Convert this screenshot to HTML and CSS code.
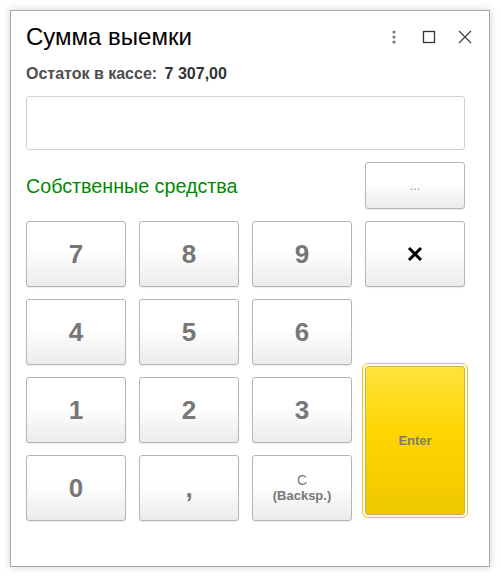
FILE: index.html
```html
<!DOCTYPE html>
<html lang="ru">
<head>
  <meta charset="UTF-8">
  <title>Сумма выемки</title>
  <link rel="stylesheet" href="styles.css">
</head>
<body>

  <div class="window">
    <div class="header">
      <div class="title">Сумма выемки</div>
      <div class="controls">
        <svg class="icon" width="12" height="14" viewBox="0 0 12 14">
          <circle cx="6" cy="2" r="1.6" fill="#777"/>
          <circle cx="6" cy="7" r="1.6" fill="#777"/>
          <circle cx="6" cy="12" r="1.6" fill="#777"/>
        </svg>
        <svg class="icon" width="14" height="14" viewBox="0 0 14 14">
          <rect x="1.5" y="1.5" width="11" height="11" fill="none" stroke="#333" stroke-width="1.3"/>
        </svg>
        <svg class="icon" width="14" height="14" viewBox="0 0 14 14">
          <path d="M1 1 L13 13 M13 1 L1 13" stroke="#444" stroke-width="1.3"/>
        </svg>
      </div>
    </div>

    <div class="balance">
      <span class="balance-label">Остаток в кассе:</span>
      <span class="balance-value">7 307,00</span>
    </div>

    <input class="amount" type="text">

    <div class="keypad">
      <div class="source">Собственные средства</div>
      <button class="key key-more">...</button>

      <button class="key">7</button>
      <button class="key">8</button>
      <button class="key">9</button>
      <button class="key key-clear">
        <svg width="16" height="16" viewBox="0 0 16 16">
          <path d="M2 2 L14 14 M14 2 L2 14" stroke="#000" stroke-width="3"/>
        </svg>
      </button>

      <button class="key">4</button>
      <button class="key">5</button>
      <button class="key">6</button>
      <div></div>

      <button class="key">1</button>
      <button class="key">2</button>
      <button class="key">3</button>
      <button class="key key-enter">Enter</button>

      <button class="key">0</button>
      <button class="key">,</button>
      <button class="key key-back"><span class="c">C</span><span>(Backsp.)</span></button>
    </div>
  </div>

</body>
</html>
```

FILE: styles.css
```css
body {
  margin: 0;
  padding: 10px;
  font-family: Arial, "Liberation Sans", sans-serif;
  background: #fff;
}

.window {
  height: 555px;
  width: 439px;
  border: 1px solid #a6a6a6;
  box-shadow: 0 0 8px rgba(0,0,0,0.18);
  background: #fff;
  padding: 0 24px 0 15px;
}

.header {
  display: flex;
  align-items: center;
  justify-content: space-between;
  height: 50px;
}

.title {
  font-size: 24px;
  color: #000;
  margin-top: 1px;
}

.controls {
  display: flex;
  align-items: center;
  gap: 22px;
  margin-top: 1px;
  margin-right: -7px;
}

.icon {
  display: block;
}

.balance {
  font-size: 16px;
  font-weight: bold;
  margin-top: 4px;
  line-height: 18px;
}

.balance-label {
  color: #4d4d4d;
}

.balance-value {
  color: #333;
  margin-left: 3px;
}

.amount {
  display: block;
  box-sizing: border-box;
  width: 439px;
  height: 54px;
  margin-top: 13px;
  border: 1px solid #d2d2d2;
  border-radius: 3px;
  outline: none;
}

.keypad {
  display: grid;
  grid-template-columns: repeat(4, 100px);
  grid-template-rows: 47px repeat(4, 66px);
  column-gap: 13px;
  row-gap: 12px;
  margin-top: 12px;
}

.source {
  grid-column: 1 / 4;
  align-self: center;
  margin-top: 2px;
  color: #008a00;
  font-size: 19.7px;
}

.key {
  box-sizing: border-box;
  border: 1px solid #b5b5b5;
  border-radius: 3px;
  background: linear-gradient(#fff 45%, #ebebeb);
  box-shadow: 0 1px 1px rgba(0,0,0,0.08);
  font-family: Arial, "Liberation Sans", sans-serif;
  font-size: 26px;
  font-weight: bold;
  color: #777;
  padding: 0;
  cursor: pointer;
}

.key-more {
  font-size: 12px;
  font-weight: normal;
  color: #888;
}

.key-clear svg {
  display: block;
  margin: 0 auto;
}

.key-back {
  display: flex;
  flex-direction: column;
  align-items: center;
  justify-content: center;
  font-size: 13px;
  line-height: 16px;
}

.key-back .c {
  font-weight: normal;
  font-size: 14px;
}

.key-enter {
  grid-row: 4 / 6;
  grid-column: 4;
  height: 149px;
  margin-top: -11px;
  border-color: #c9b25a;
  background: linear-gradient(#ffe23c, #fdd600 45%, #efc700);
  font-size: 13px;
  color: #7c7c7c;
  outline: 1px solid #f2c600;
  outline-offset: 2px;
}
```
